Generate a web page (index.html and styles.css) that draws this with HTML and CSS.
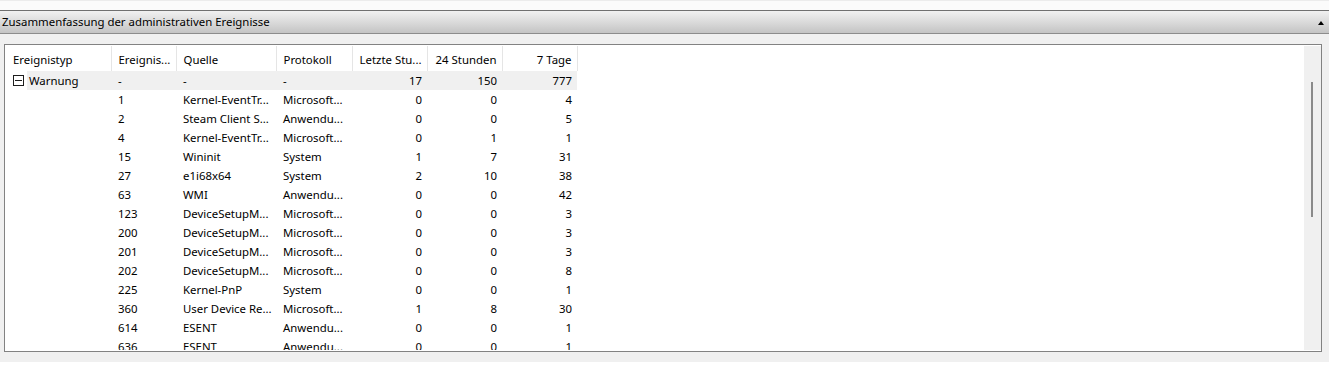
FILE: index.html
```html
<!DOCTYPE html>
<html lang="de">
<head>
    <meta charset="UTF-8">
    <title>Zusammenfassung der administrativen Ereignisse</title>
    <link rel="stylesheet" href="styles.css">
</head>
<body>
    <div class="top-strip"></div>

    <div class="panel-header">
        <span class="panel-title">Zusammenfassung der administrativen Ereignisse</span>
        <span class="collapse-arrow"></span>
    </div>

    <div class="panel-body">
        <div class="list-box">
            <div class="list-area">
                <table class="event-table">
                    <colgroup>
                        <col class="c-type">
                        <col class="c-id">
                        <col class="c-source">
                        <col class="c-log">
                        <col class="c-num">
                        <col class="c-num">
                        <col class="c-num">
                    </colgroup>
                    <thead>
                        <tr>
                            <th class="first">Ereignistyp</th>
                            <th>Ereignis...</th>
                            <th>Quelle</th>
                            <th>Protokoll</th>
                            <th class="num">Letzte Stu...</th>
                            <th class="num">24 Stunden</th>
                            <th class="num">7 Tage</th>
                        </tr>
                    </thead>
                    <tbody>
                        <tr class="group-row">
                            <td class="first"><span class="expander"></span>Warnung</td>
                            <td>-</td>
                            <td>-</td>
                            <td>-</td>
                            <td class="num">17</td>
                            <td class="num">150</td>
                            <td class="num">777</td>
                        </tr>
                        <tr><td></td><td>1</td><td>Kernel-EventTr...</td><td>Microsoft...</td><td class="num">0</td><td class="num">0</td><td class="num">4</td></tr>
                        <tr><td></td><td>2</td><td>Steam Client S...</td><td>Anwendu...</td><td class="num">0</td><td class="num">0</td><td class="num">5</td></tr>
                        <tr><td></td><td>4</td><td>Kernel-EventTr...</td><td>Microsoft...</td><td class="num">0</td><td class="num">1</td><td class="num">1</td></tr>
                        <tr><td></td><td>15</td><td>Wininit</td><td>System</td><td class="num">1</td><td class="num">7</td><td class="num">31</td></tr>
                        <tr><td></td><td>27</td><td>e1i68x64</td><td>System</td><td class="num">2</td><td class="num">10</td><td class="num">38</td></tr>
                        <tr><td></td><td>63</td><td>WMI</td><td>Anwendu...</td><td class="num">0</td><td class="num">0</td><td class="num">42</td></tr>
                        <tr><td></td><td>123</td><td>DeviceSetupM...</td><td>Microsoft...</td><td class="num">0</td><td class="num">0</td><td class="num">3</td></tr>
                        <tr><td></td><td>200</td><td>DeviceSetupM...</td><td>Microsoft...</td><td class="num">0</td><td class="num">0</td><td class="num">3</td></tr>
                        <tr><td></td><td>201</td><td>DeviceSetupM...</td><td>Microsoft...</td><td class="num">0</td><td class="num">0</td><td class="num">3</td></tr>
                        <tr><td></td><td>202</td><td>DeviceSetupM...</td><td>Microsoft...</td><td class="num">0</td><td class="num">0</td><td class="num">8</td></tr>
                        <tr><td></td><td>225</td><td>Kernel-PnP</td><td>System</td><td class="num">0</td><td class="num">0</td><td class="num">1</td></tr>
                        <tr><td></td><td>360</td><td>User Device Re...</td><td>Microsoft...</td><td class="num">1</td><td class="num">8</td><td class="num">30</td></tr>
                        <tr><td></td><td>614</td><td>ESENT</td><td>Anwendu...</td><td class="num">0</td><td class="num">0</td><td class="num">1</td></tr>
                        <tr><td></td><td>636</td><td>ESENT</td><td>Anwendu...</td><td class="num">0</td><td class="num">0</td><td class="num">1</td></tr>
                    </tbody>
                </table>
            </div>
            <div class="v-scrollbar">
                <div class="v-thumb"></div>
            </div>
        </div>
    </div>
</body>
</html>
```

FILE: styles.css
```css
body {
    font-family: 'Segoe UI', 'Noto Sans', 'Liberation Sans', sans-serif;
    font-size: 11.4px;
    margin: 0;
    padding: 0;
    background: #ffffff;
    color: #000;
}

.top-strip {
    height: 10px;
    background: #fbfbfb;
    border-top: 1px solid #ececec;
    box-sizing: border-box;
}

.panel-header {
    height: 24px;
    box-sizing: border-box;
    border-top: 1px solid #707070;
    border-bottom: 1px solid #8c8c8c;
    background: linear-gradient(#f1f1f1, #c4c4c4);
    display: flex;
    align-items: center;
    justify-content: space-between;
    padding: 0 5px 0 2px;
}

.panel-title {
    line-height: 20px;
}

.collapse-arrow {
    width: 0;
    height: 0;
    border-left: 3px solid transparent;
    border-right: 3px solid transparent;
    border-bottom: 4px solid #000;
    margin-top: 1px;
}

.panel-body {
    background: #f0f0f0;
    padding: 10px 7px 10px 4px;
}

.list-box {
    height: 308px;
    box-sizing: border-box;
    border: 1px solid #828282;
    background: #fff;
    padding: 1px 0 1px 1px;
    display: flex;
}

.list-area {
    flex: 1;
    overflow: hidden;
}

.v-scrollbar {
    width: 17px;
    background: #f0f0f0;
    padding-top: 36px;
    box-sizing: border-box;
}

.v-thumb {
    width: 2px;
    height: 135px;
    margin-left: 7px;
    background: #8a8a8a;
}

.event-table {
    border-collapse: collapse;
    table-layout: fixed;
    width: 571px;
}

.c-type { width: 105px; }
.c-id { width: 65px; }
.c-source { width: 100px; }
.c-log { width: 76px; }
.c-num { width: 75px; }

.event-table th {
    height: 24px;
    padding: 1px 5px 0 7px;
    font-weight: normal;
    text-align: left;
    border-right: 1px solid #e5e5e5;
    white-space: nowrap;
    overflow: hidden;
}

.event-table td {
    height: 19px;
    padding: 0 5px 0 7px;
    white-space: nowrap;
    overflow: hidden;
}

.event-table .first {
    padding-left: 7px;
}

.event-table .num {
    text-align: right;
}

.group-row td {
    background: #f0f0f0;
}

.group-row td.first {
    background: linear-gradient(to right, transparent 21px, #f0f0f0 21px);
}

.expander {
    display: inline-block;
    width: 11px;
    height: 11px;
    box-sizing: border-box;
    border: 1px solid #1e1e1e;
    vertical-align: -1px;
    margin-right: 5px;
    background: linear-gradient(#1e1e1e, #1e1e1e) center / 7px 1px no-repeat;
}
```
